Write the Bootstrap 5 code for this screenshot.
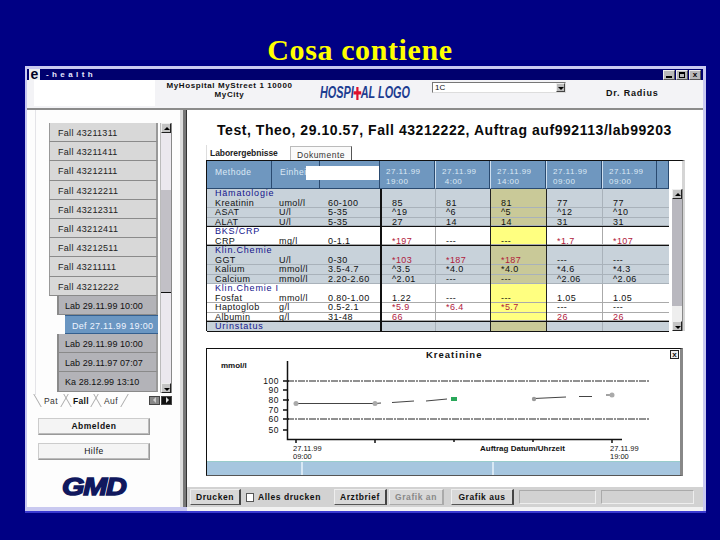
<!DOCTYPE html>
<html lang="de">
<head>
<meta charset="utf-8">
<title>Cosa contiene</title>
<link href="https://cdn.jsdelivr.net/npm/bootstrap@5.3.0/dist/css/bootstrap.min.css" rel="stylesheet">
<style>
html,body{height:540px;overflow:hidden}
body{background:#000084;font-family:"Liberation Sans",Arial,sans-serif;color:#111;font-size:9px;line-height:1}
.slide-head{height:66px;padding-top:35px;margin:0;text-align:center;font:bold 30px/30px "Liberation Serif","Times New Roman",serif;letter-spacing:.6px;color:#ff0}
.shell{width:681px;height:447px;margin-left:25px;background:#c9c9f0;padding:3px 3px 3px 2px;border-bottom:2px solid #3a3ad0}
.capbar{height:11px;background:#00006e;color:#e8e8ff;font-weight:bold;font-size:8px;letter-spacing:3.4px;padding-right:2px}
.e-mark{background:#eee;color:#002;font-size:14px;line-height:10px;letter-spacing:0;width:11px;height:11px;text-align:center;margin:0 6px 0 2px}
.ctl{width:12px;height:10px;background:#b9b9b9;border:1px solid #eee;border-right-color:#555;border-bottom-color:#555;margin-left:1px;position:relative}
.ctl i{position:absolute;display:block}
.ctl-min i{left:2px;right:2px;bottom:1px;height:2px;background:#000}
.ctl-max i{left:2px;right:2px;top:1px;bottom:1px;border:1px solid #000;border-top-width:2px}
.ctl-x{font:bold 8px/8px "Liberation Sans",sans-serif;text-align:center;letter-spacing:0;color:#000}
.hdr{height:30px;background:#f3f3f6;border-bottom:2px solid #8b8b8b;position:relative}
.hdr-blank{position:absolute;left:7px;top:0;width:121px;height:26px;background:#fff}
.hdr-addr{position:absolute;left:130px;top:2px;width:145px;text-align:center;font-weight:bold;font-size:8px;line-height:8.5px;letter-spacing:.6px}
.logo-h{position:absolute;left:293px;top:4px;font:italic bold 16px/18px "Liberation Sans",sans-serif;color:#1d3d91;transform:scaleX(.68);transform-origin:left;white-space:nowrap}
.logo-h svg{vertical-align:-2px;margin:0 -1px}
.pick{position:absolute;left:405px;top:2px;width:134px;height:11px;background:#fff;border:1px solid #777;border-right-color:#ddd;border-bottom-color:#ddd;font-size:8px;line-height:9px;padding-left:2px}
.pick b{position:absolute;right:0;top:0;width:9px;height:9px;background:#bbb;border:1px solid #eee;border-right-color:#444;border-bottom-color:#444}
.pick b::after{content:"";position:absolute;left:1px;top:3px;border:3px solid transparent;border-top-color:#000}
.doc{position:absolute;left:579px;top:9px;font-weight:bold;font-size:9px;letter-spacing:.8px}
.body-wrap{height:397px;background:#fff}
.leftp{width:153px;flex:none;background:#fdfdfd;padding:13px 0 0 9px;position:relative}
.leftp::before{content:"";position:absolute;left:8px;top:0;height:285px;width:1px;background:#e4e4e8}
.splitter{width:7px;flex:none;background:linear-gradient(90deg,#dcdcdc 0 3px,#777 3px 6px,#333 6px)}
.tree{width:109px;margin-left:13px;flex:none}
.fall{height:19.2px;background:#d8d8d8;border-left:1px solid #999;border-right:2px solid #999;border-bottom:1px solid #8a8a8a;padding:6px 0 0 8px;letter-spacing:.3px;color:#222;white-space:nowrap;overflow:hidden}
.sub{margin-left:8px;background:#b3b3b8;letter-spacing:.05px;padding-left:6px;color:#111;border-left:2px solid #8a8a8a}
.sel{margin-left:16px;background:#6a96c2;color:#eef4ff;padding-left:7px;border:0;border-top:1px solid #35608f;border-bottom:1px solid #35608f}
.vscroll{width:12px;flex:none;background:#ebe8ee;border-left:1px solid #bbb;border-right:1px solid #888;margin-left:2px;position:relative}
.vb{height:10px;background:#c4c4c4;border:1px solid #eee;border-right-color:#222;border-bottom-color:#222;position:relative}
.vb::after{content:"";position:absolute;left:2px;top:0;border:3px solid transparent;border-bottom-color:#000}
.vb.dn::after{top:4px;border-bottom-color:transparent;border-top-color:#000}
.vthumb{position:absolute;left:0;right:0;background:#c2c0c6;border-bottom:1px solid #111}
.btabs{height:13px;width:136px;font-size:8.5px;letter-spacing:.4px;margin-top:1px;color:#333}
.btab{width:30px;padding-top:3px;text-align:center;position:relative}
.btab::before,.btab::after{content:"";position:absolute;top:0;bottom:0;width:1px;background:#aaa}
.btab::before{left:1px;transform:skewX(30deg)}
.btab::after{right:1px;transform:skewX(-30deg)}
.btab.on{font-weight:bold;color:#111}
.arr{width:11px;height:9px;background:#888;margin-left:1px;position:relative;border:1px solid #444;margin-top:2px}
.arr.on{background:#111}
.arr::after{content:"";position:absolute;top:0;border:3px solid transparent}
.arr.l::after{left:0;border-right-color:#ccc}
.arr.r::after{left:4px;border-left-color:#ddd}
.sidebtn{width:112px;height:17px;background:#f4f4f4;border:1px solid #999;border-top-color:#ccc;border-left-color:#ccc;box-shadow:inset -1px -1px 0 #bbb;font-size:8.5px;letter-spacing:.5px;line-height:15px;text-align:center;margin-left:2px;color:#111}
.gmd{margin:15px 0 0 26px;font:italic 900 24px/24px "Liberation Sans",sans-serif;color:#10185e;-webkit-text-stroke:1.4px #10185e;letter-spacing:-1px;transform:scaleX(1.2);transform-origin:left}
.rightp{min-width:0;position:relative}
.rtitle{font-weight:bold;font-size:14px;line-height:14px;padding:13px 0 0 30px;letter-spacing:.55px;white-space:nowrap;color:#0a0a0a;height:35px}
.tabsx{height:15px;padding-left:19px;font-size:8.5px}
.tabx1{padding:4px 0 0 3px;border-left:1px solid #ddd;width:84px;white-space:nowrap;overflow:hidden;color:#222;font-weight:bold;letter-spacing:-.05px}
.tabx2{padding-top:4px;width:62px;height:14px;margin-top:1px;border:1px solid #bbb;border-right-color:#555;border-bottom:0;text-align:center;letter-spacing:.5px;color:#333;background:#fafafa}
.tblbox{width:479px;margin-left:19px;position:relative;height:171px;border:1px solid #111;border-right:3px solid #d5d5d5;border-bottom:0}
.thd{display:grid;grid-template-columns:65px 48px 60px 55px 55px 56px 56px 55px 12px;height:28px;background:#fff}
.thd>span{background:#6f97bf;color:#dce9f5;border:1px solid #2a4a70;border-width:0 1px 1px 0;padding:6px 0 0 8px;line-height:10px;letter-spacing:.5px;white-space:nowrap;overflow:hidden;font-size:8.5px}
.thd>.dt{padding:6px 0 0 6px;font-size:8px}
.thd>.dt+.dt{border-left:1px solid #cfe0f0}
.hide{position:absolute;left:99px;top:5px;width:73px;height:14px;background:#fff}
.tbody{display:flex}
.rows{width:462px;flex:none}
.tr{display:grid;grid-template-columns:65px 48px 60px 55px 55px 56px 56px 67px;height:9.5px;line-height:9.5px;font-size:9px;letter-spacing:.4px;white-space:nowrap}
.tr>span{padding-left:8px;overflow:hidden;background:var(--bg);box-shadow:inset 0 -1px 0 var(--ln)}
.tr>span:nth-child(n+4){padding-left:10px;border-left:1px solid var(--ln)}
.tr>span:nth-child(4){border-left:2px solid #111}
.tr>span:nth-child(6),.tr>span:nth-child(7){border-left:1px solid #222}
.tr>span:nth-child(6){background:var(--yl)}
.tr>span:nth-child(2){padding-left:7px}
.g{--bg:#c8d2da;--ln:#a9b2ba;--yl:#c9c998}
.w{--bg:#fff;--ln:#aaa;--yl:#ffff80}
.sec{color:#14148c;letter-spacing:.8px}
.tr.sec>span:first-child{grid-column:span 3}
.tr.sec>span:nth-child(2){border-left:2px solid #111;padding-left:10px}
.tr.sec>span:nth-child(3){border-left:1px solid var(--ln)}
.tr.sec>span:nth-child(4){border-left:1px solid #222;background:var(--yl)}
.tr.sec>span:nth-child(5){border-left:1px solid #222;background:var(--bg)}
.tr.sec>span:nth-child(6){border-left:1px solid var(--ln);background:var(--bg)}
.tr.sec>span{box-shadow:none}
.dk{border-bottom:1px solid #111}
.redt{color:#b0203c}
.rscroll{width:11px;flex:none;margin-left:3px;position:relative;background:#b9b8bf;height:142px;border-right:1px solid #888;overflow:hidden}
.rscroll .vb{height:10px;position:absolute;left:0;right:0}
.rscroll .vbd{bottom:0}
.rthumb{position:absolute;left:0;right:0;top:117px;height:16px;background:#eeeeee}
.chartbox{width:477px;margin:17px 0 0 19px;height:128px;border:1px solid #111;border-right:3px solid #888;border-bottom:1px solid #555;background:#fff;position:relative}
.chartbox svg{display:block}
.chart-x{position:absolute;right:1px;top:1px;width:9px;height:9px;border:1px solid #222;font:bold 8px/7px "Liberation Sans",sans-serif;text-align:center;background:#eee}
.chartfoot{height:14px;background:#a6c6df;border-top:1px solid #9cc;display:flex}
.chartfoot i{display:block;border-right:2px solid #d8e8f4;height:13px}
.cbar{height:24px;margin-top:11px;background:#d2d2d2;padding:4px 3px;font-weight:bold;font-size:8.5px;letter-spacing:.55px;border-bottom:4px solid #f2f2f2;color:#111}
.cb{height:16px;line-height:14px;text-align:center;background:#d8d8d8;border:1px solid #eee;border-right:2px solid #444;border-bottom:1px solid #555;flex:none}
.cb.off{color:#888;border-right-color:#aaa;border-bottom-color:#aaa}
.ck{width:8px;height:9px;background:#fff;border:1px solid #555;display:inline-block;margin:0 4px 0 5px;flex:none}
.chk-label{width:76px;flex:none}
.sunk{height:14px;border:1px solid #aaa;border-right-color:#eee;border-bottom-color:#eee;flex:none}
.w49{width:51px}.w52{width:53px;margin-right:2px}.w55{width:55px;margin-right:7px}.w64{width:63px;margin-right:5px}.w78{width:77px;margin-right:5px}.w94{width:93px}
.m12{margin-top:11px}.m8{margin-top:8px}
.f96{width:96px}.f191{width:191px}
</style>
</head>
<body>
<h1 class="slide-head">Cosa contiene</h1>
<div class="shell">
  <div class="capbar d-flex align-items-center">
    <span class="e-mark">e</span><span>-health</span>
    <span class="ctl ctl-min ms-auto"><i></i></span><span class="ctl ctl-max"><i></i></span><span class="ctl ctl-x">x</span>
  </div>
  <div class="hdr">
    <div class="hdr-blank"></div>
    <div class="hdr-addr">MyHospital MyStreet 1 10000<br>MyCity</div>
    <div class="logo-h">HOSPI<svg width="12" height="13" viewBox="0 0 11 12"><path fill="#e0102c" d="M4 0h3v4h4v3H7v5H4V7H0V4h4z"/></svg>AL LOGO</div>
    <div class="pick">1C<b></b></div>
    <div class="doc">Dr. Radius</div>
  </div>
  <div class="body-wrap d-flex">
    <div class="leftp">
      <div class="d-flex" style="height:270px">
        <div class="tree">
          <div class="fall">Fall 43211311</div>
          <div class="fall">Fall 43211411</div>
          <div class="fall">Fall 43212111</div>
          <div class="fall">Fall 43212211</div>
          <div class="fall">Fall 43212311</div>
          <div class="fall">Fall 43212411</div>
          <div class="fall">Fall 43212511</div>
          <div class="fall">Fall 43211111</div>
          <div class="fall">Fall 43212222</div>
          <div class="fall sub">Lab 29.11.99 10:00</div>
          <div class="fall sel">Def 27.11.99 19:00</div>
          <div class="fall sub">Lab 29.11.99 10:00</div>
          <div class="fall sub">Lab 29.11.97 07:07</div>
          <div class="fall sub">Ka 28.12.99 13:10</div>
        </div>
        <div class="vscroll">
          <div class="vb"></div>
          <div class="vthumb" style="top:67px;height:103px"></div>
          <div class="vb dn position-absolute bottom-0 start-0 end-0"></div>
        </div>
      </div>
      <div class="btabs d-flex">
        <span class="btab">Pat</span><span class="btab on">Fall</span><span class="btab">Auf</span>
        <span class="arr l ms-auto"></span><span class="arr r on"></span>
      </div>
      <div class="sidebtn fw-bold m12">Abmelden</div>
      <div class="sidebtn m8">Hilfe</div>
      <div class="gmd">GMD</div>
    </div>
    <div class="splitter"></div>
    <div class="rightp flex-grow-1">
      <div class="rtitle">Test, Theo, 29.10.57, Fall 43212222, Auftrag auf992113/lab99203</div>
      <div class="tabsx d-flex"><span class="tabx1">Laborergebnisse</span><span class="tabx2">Dokumente</span></div>
      <div class="tblbox">
        <div class="thd">
          <span>Methode</span><span>Einheit</span><span>Bereich</span>
          <span class="dt">27.11.99<br>19:00</span><span class="dt">27.11.99<br>&nbsp;4:00</span><span class="dt">27.11.99<br>14:00</span><span class="dt">27.11.99<br>09:00</span><span class="dt">27.11.99<br>09:00</span><span></span>
        </div>
        <div class="hide"></div>
        <div class="tbody">
          <div class="rows">
            <div class="tr sec g"><span>Hämatologie</span><span></span><span></span><span></span><span></span><span></span></div>
            <div class="tr g"><span>Kreatinin</span><span>umol/l</span><span>60-100</span><span>85</span><span>81</span><span>81</span><span>77</span><span>77</span></div>
            <div class="tr g"><span>ASAT</span><span>U/l</span><span>5-35</span><span>^19</span><span>^6</span><span>^5</span><span>^12</span><span>^10</span></div>
            <div class="tr g dk"><span>ALAT</span><span>U/l</span><span>5-35</span><span>27</span><span>14</span><span>14</span><span>31</span><span>31</span></div>
            <div class="tr sec w"><span>BKS/CRP</span><span></span><span></span><span></span><span></span><span></span></div>
            <div class="tr w dk"><span>CRP</span><span>mg/l</span><span>0-1.1</span><span class="redt">*197</span><span>---</span><span>---</span><span class="redt">*1.7</span><span class="redt">*107</span></div>
            <div class="tr sec g"><span>Klin.Chemie</span><span></span><span></span><span></span><span></span><span></span></div>
            <div class="tr g"><span>GGT</span><span>U/l</span><span>0-30</span><span class="redt">*103</span><span class="redt">*187</span><span class="redt">*187</span><span>---</span><span>---</span></div>
            <div class="tr g"><span>Kalium</span><span>mmol/l</span><span>3.5-4.7</span><span>^3.5</span><span>*4.0</span><span>*4.0</span><span>*4.6</span><span>*4.3</span></div>
            <div class="tr g"><span>Calcium</span><span>mmol/l</span><span>2.20-2.60</span><span>^2.01</span><span>---</span><span>---</span><span>^2.06</span><span>^2.06</span></div>
            <div class="tr sec w"><span>Klin.Chemie I</span><span></span><span></span><span></span><span></span><span></span></div>
            <div class="tr w"><span>Fosfat</span><span>mmol/l</span><span>0.80-1.00</span><span>1.22</span><span>---</span><span>---</span><span>1.05</span><span>1.05</span></div>
            <div class="tr w"><span>Haptoglob</span><span>g/l</span><span>0.5-2.1</span><span class="redt">*5.9</span><span class="redt">*6.4</span><span class="redt">*5.7</span><span>---</span><span>---</span></div>
            <div class="tr w dk"><span>Albumin</span><span>g/l</span><span>31-48</span><span class="redt">66</span><span></span><span></span><span class="redt">26</span><span class="redt">26</span></div>
            <div class="tr sec g dk"><span>Urinstatus</span><span></span><span></span><span></span><span></span><span></span></div>
          </div>
          <div class="rscroll"><div class="vb"></div><div class="rthumb"></div><div class="vb dn vbd"></div></div>
        </div>
      </div>
      <div class="chartbox">
        <svg width="473" height="112" viewBox="207 349 473 112" font-family="Liberation Sans, Arial, sans-serif" font-size="8.5" fill="#111">
          <text x="426" y="358" font-weight="bold" font-size="9.5" letter-spacing="1">Kreatinine</text>
          <text x="221" y="368" font-weight="bold" font-size="8">mmol/l</text>
          <path d="M287.500 361V439.500H622" fill="none" stroke="#111" stroke-width="1.500"/>
          <path d="M283 381h6M283 390h4M283 400h6M283 410h4M283 419h6M283 430h4M296 439v4M375 439v4M454 439v3M533 439v3M612 439v4" stroke="#111" stroke-width="1.500"/>
          <path d="M287 381H650M287 419H650" stroke="#222" stroke-dasharray="7 1 2 1"/>
          <path d="M296 403.500H375M375 403.500L381 403M392 402.500L414 401M426 401L447 399M534 398.500L566 397M579 396.500H592M606 395H612" stroke="#444" fill="none"/>
          <circle cx="296" cy="403.500" r="2.500" fill="#aaa"/><circle cx="375" cy="403.500" r="2.500" fill="#aaa"/><rect x="451" y="397" width="6" height="4" fill="#2aa85a"/><circle cx="534" cy="399" r="2.200" fill="#999"/><circle cx="612" cy="395" r="2.500" fill="#aaa"/>
          <g text-anchor="end" font-size="8.5" letter-spacing=".5"><text x="279" y="384">100</text><text x="279" y="393">90</text><text x="279" y="403">80</text><text x="279" y="413">70</text><text x="279" y="422">60</text><text x="279" y="433">50</text></g>
          <g font-size="7.500"><text x="293" y="451">27.11.99</text><text x="293" y="459">09:00</text><text x="610" y="451">27.11.99</text><text x="610" y="459">19:00</text></g>
          <text x="480" y="451" font-weight="bold" font-size="8">Auftrag Datum/Uhrzeit</text>
        </svg>
        <div class="chart-x">x</div>
        <div class="chartfoot"><i class="f96"></i><i class="f191"></i></div>
      </div>
      <div class="cbar d-flex align-items-center">
        <span class="cb w49">Drucken</span>
        <span class="ck"></span><span class="chk-label">Alles drucken</span>
        <span class="cb w52">Arztbrief</span>
        <span class="cb off w55">Grafik an</span>
        <span class="cb w64">Grafik aus</span>
        <span class="sunk w78"></span>
        <span class="sunk w94"></span>
      </div>
    </div>
  </div>
</div>
</body>
</html>
